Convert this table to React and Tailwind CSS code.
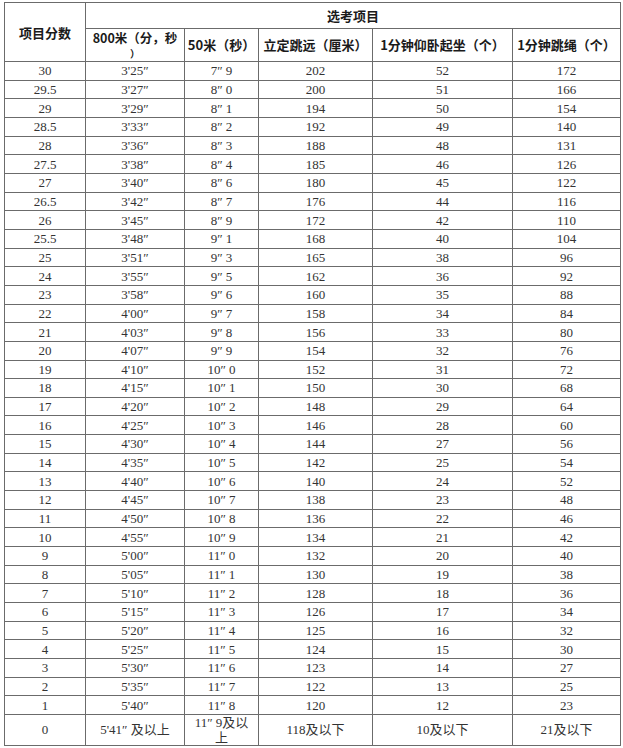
import React from 'react';

const rows = [
  ['30', "3'25″", '7″ 9', '202', '52', '172'],
  ['29.5', "3'27″", '8″ 0', '200', '51', '166'],
  ['29', "3'29″", '8″ 1', '194', '50', '154'],
  ['28.5', "3'33″", '8″ 2', '192', '49', '140'],
  ['28', "3'36″", '8″ 3', '188', '48', '131'],
  ['27.5', "3'38″", '8″ 4', '185', '46', '126'],
  ['27', "3'40″", '8″ 6', '180', '45', '122'],
  ['26.5', "3'42″", '8″ 7', '176', '44', '116'],
  ['26', "3'45″", '8″ 9', '172', '42', '110'],
  ['25.5', "3'48″", '9″ 1', '168', '40', '104'],
  ['25', "3'51″", '9″ 3', '165', '38', '96'],
  ['24', "3'55″", '9″ 5', '162', '36', '92'],
  ['23', "3'58″", '9″ 6', '160', '35', '88'],
  ['22', "4'00″", '9″ 7', '158', '34', '84'],
  ['21', "4'03″", '9″ 8', '156', '33', '80'],
  ['20', "4'07″", '9″ 9', '154', '32', '76'],
  ['19', "4'10″", '10″ 0', '152', '31', '72'],
  ['18', "4'15″", '10″ 1', '150', '30', '68'],
  ['17', "4'20″", '10″ 2', '148', '29', '64'],
  ['16', "4'25″", '10″ 3', '146', '28', '60'],
  ['15', "4'30″", '10″ 4', '144', '27', '56'],
  ['14', "4'35″", '10″ 5', '142', '25', '54'],
  ['13', "4'40″", '10″ 6', '140', '24', '52'],
  ['12', "4'45″", '10″ 7', '138', '23', '48'],
  ['11', "4'50″", '10″ 8', '136', '22', '46'],
  ['10', "4'55″", '10″ 9', '134', '21', '42'],
  ['9', "5'00″", '11″ 0', '132', '20', '40'],
  ['8', "5'05″", '11″ 1', '130', '19', '38'],
  ['7', "5'10″", '11″ 2', '128', '18', '36'],
  ['6', "5'15″", '11″ 3', '126', '17', '34'],
  ['5', "5'20″", '11″ 4', '125', '16', '32'],
  ['4', "5'25″", '11″ 5', '124', '15', '30'],
  ['3', "5'30″", '11″ 6', '123', '14', '27'],
  ['2', "5'35″", '11″ 7', '122', '13', '25'],
  ['1', "5'40″", '11″ 8', '120', '12', '23'],
];

const lastRow = ['0', "5'41″ 及以上", '11″ 9及以上', '118及以下', '10及以下', '21及以下'];

// 表头用黑体，数据用宋体风格的衬线字体
const headFont = "font-['Noto_Sans_CJK_SC',sans-serif]";
const bodyFont = "font-['Liberation_Serif','Noto_Sans_CJK_SC',serif]";

export default function App() {
  return (
    <div className="bg-white w-[623px] h-[748px] pl-[4px] pt-[2px]">
      <table className="table-fixed border-collapse w-[616px] border border-[#6b6b6b] text-[13px] leading-[15px]">
        <colgroup>
          <col className="w-[81px]" />
          <col className="w-[99px]" />
          <col className="w-[74px]" />
          <col className="w-[114px]" />
          <col className="w-[140px]" />
          <col className="w-[108px]" />
        </colgroup>
        <thead className={`${headFont} font-bold text-[#1a1a1a]`}>
          <tr className="h-[25.5px]">
            <th rowSpan={2} className="border border-[#6b6b6b] p-0 text-center">项目分数</th>
            <th colSpan={5} className="border border-[#6b6b6b] p-0 text-center">选考项目</th>
          </tr>
          <tr className="h-[32.5px]">
            <th className="border border-[#6b6b6b] p-0 text-center whitespace-nowrap">
              <span className="block text-[12.5px] leading-[18px]">800米（分，秒</span>
              <span className="block text-[10px] leading-[14.5px]">）</span>
            </th>
            <th className="border border-[#6b6b6b] p-0 text-center">50米（秒）</th>
            <th className="border border-[#6b6b6b] p-0 text-center">立定跳远（厘米）</th>
            <th className="border border-[#6b6b6b] p-0 text-center">1分钟仰卧起坐（个）</th>
            <th className="border border-[#6b6b6b] p-0 text-center">1分钟跳绳（个）</th>
          </tr>
        </thead>
        <tbody className={`${bodyFont} text-[#333333]`}>
          {rows.map((r, idx) => (
            <tr key={idx} className="h-[18.66px]">
              {r.map((c, i) => (
                <td key={i} className="border border-[#6b6b6b] p-0 text-center">{c}</td>
              ))}
            </tr>
          ))}
          <tr className="h-[30px]">
            {lastRow.map((c, i) => (
              <td key={i} className={`border border-[#6b6b6b] py-0 text-center ${i === 2 ? 'px-[8px]' : 'px-0'}`}>{c}</td>
            ))}
          </tr>
        </tbody>
      </table>
    </div>
  );
}
